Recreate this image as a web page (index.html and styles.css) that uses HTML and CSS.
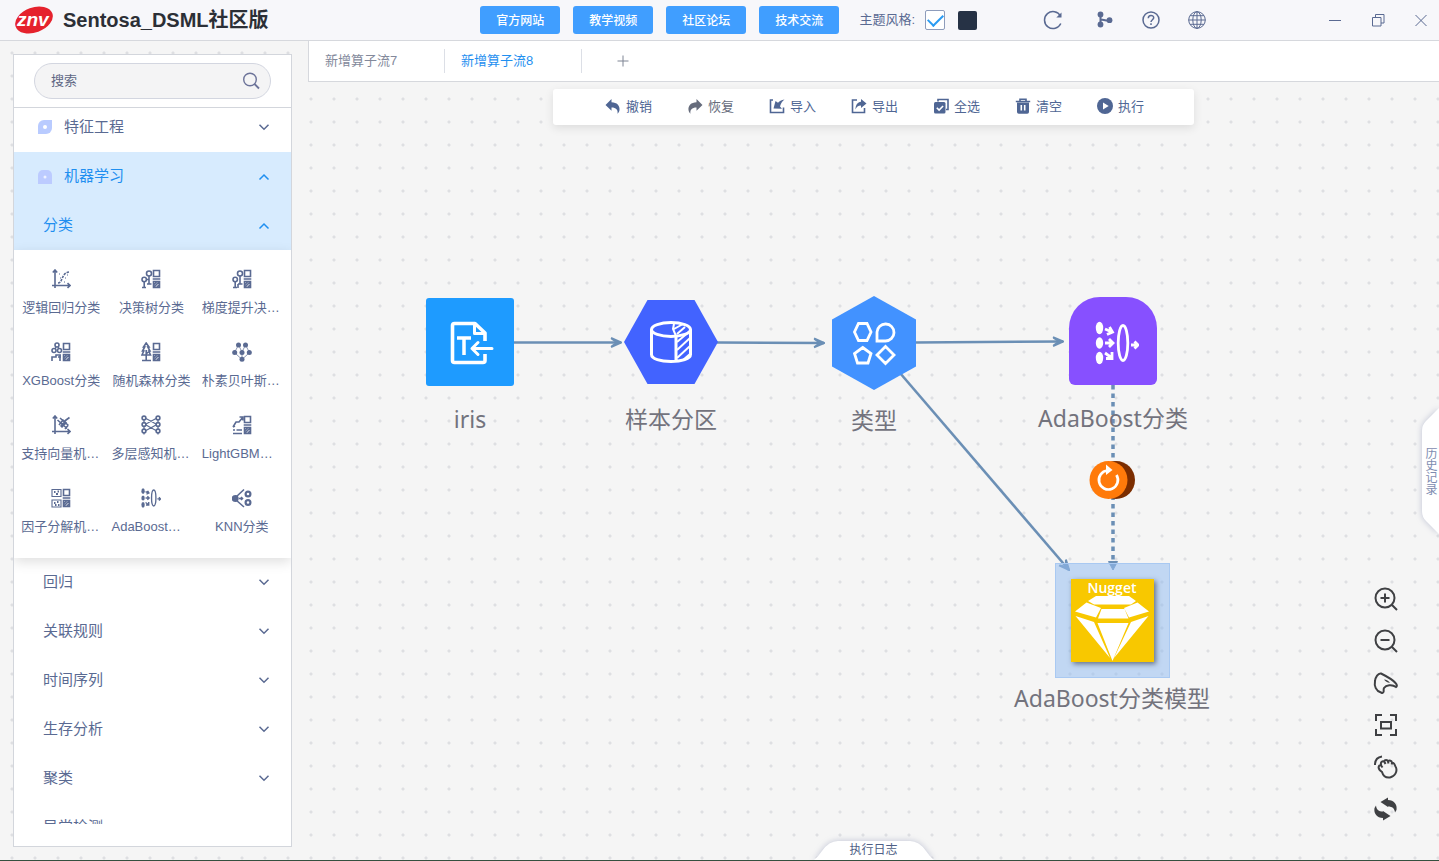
FILE: index.html
```html
<!DOCTYPE html>
<html lang="zh-CN">
<head>
<meta charset="utf-8">
<title>Sentosa_DSML社区版</title>
<link rel="stylesheet" href="styles.css">
</head>
<body>
<svg class="defs" aria-hidden="true">
  <symbol id="boxes" viewBox="0 0 20 20"><path d="M12.5 1.5h6v6h-6zM12.5 12.5h6v6h-6zM11.7 10h7.6M13 18l5-5M13 15.5l2.500-2.500M15.500 18.500l3-3"/></symbol>
  <symbol id="axes" viewBox="0 0 20 20"><path d="M4 1v18M1 16.500h18M1.800 3.500L4 1l2.200 2.500M16.500 14.200l2.500 2.300-2.500 2.300"/></symbol>
  <symbol id="down" viewBox="0 0 12 12"><path d="M1.500 3.800L6 8.200l4.500-4.400"/></symbol>
  <symbol id="up" viewBox="0 0 12 12"><path d="M1.500 8.500L6 4l4.500 4.500"/></symbol>
  <symbol id="boost" viewBox="0 0 44 44"><g fill="currentColor" stroke="none"><ellipse cx="4.500" cy="7" rx="3.700" ry="6.200"/><ellipse cx="4.500" cy="22" rx="3.700" ry="5.700"/><ellipse cx="4.500" cy="37" rx="3.700" ry="6.200"/></g><ellipse cx="28" cy="22" rx="4.800" ry="17.500"/><path d="M10 8l7 3M12 13.500l5.500-2.500-3-5M10 22h7M14 18l4 4-4 4M10 32l7 5M17 31v6.500h-6M36 24h6M39.500 20.500L43 24l-3.500 3.500"/></symbol>
</svg>

<header class="topbar">
  <div class="brand">
    <svg class="logo" viewBox="0 0 38 30"><ellipse cx="19" cy="15" rx="19.500" ry="12.500" transform="rotate(-20 19 15)" fill="#e5222d"/><text x="2" y="21" class="logo-text">znv</text></svg>
    <h1>Sentosa_DSML社区版</h1>
  </div>
  <nav class="links">
    <button type="button">官方网站</button>
    <button type="button">教学视频</button>
    <button type="button">社区论坛</button>
    <button type="button">技术交流</button>
  </nav>
  <div class="theme">
    <label for="light">主题风格:</label>
    <input type="checkbox" id="light" class="check" checked>
    <button type="button" class="swatch" aria-label="深色"></button>
  </div>
  <div class="sys">
    <button type="button" aria-label="刷新"><svg viewBox="0 0 20 20"><path d="M17.800 13.500A8.500 8.500 0 1 1 17.500 6"/><path d="M18.500 2.500v5h-5.200z" fill="currentColor" stroke="none"/></svg></button>
    <button type="button" aria-label="分支"><svg viewBox="0 0 20 20"><path d="M5.500 5v10M5.500 9.500c3 0 4 1 8 1" stroke-width="2"/><g fill="currentColor" stroke="none"><circle cx="5.500" cy="4.500" r="2.900"/><circle cx="5.500" cy="14.500" r="2.900"/><circle cx="14.500" cy="10.200" r="2.900"/></g></svg></button>
    <button type="button" aria-label="帮助"><svg viewBox="0 0 20 20"><circle cx="10" cy="10" r="8"/><path d="M7.300 8.200c0-3.700 5.400-3.500 5.400-.4 0 1.900-2.700 2-2.700 4.200M10 13.300v1.600"/></svg></button>
    <button type="button" aria-label="语言"><svg viewBox="0 0 20 20"><circle cx="10" cy="10" r="8.300"/><ellipse cx="10" cy="10" rx="4.200" ry="8.300"/><path d="M10 1.700v16.600M1.700 10h16.600M3 5.700h14M3 14.300h14"/></svg></button>
  </div>
  <div class="window">
    <button type="button" aria-label="最小化"><svg viewBox="0 0 20 20"><path d="M4 10.500h12"/></svg></button>
    <button type="button" aria-label="还原"><svg viewBox="0 0 20 20"><path d="M4.500 7.500h8.500v8.500H4.500zM7.500 7.500v-3h8.500V13h-3"/></svg></button>
    <button type="button" aria-label="关闭"><svg viewBox="0 0 20 20"><path d="M4.500 5l11 11M15.500 5l-11 11"/></svg></button>
  </div>
</header>

<main class="main">
  <aside class="sidebar">
    <form class="search" role="search">
      <div class="field">
        <input type="text" placeholder="搜索" aria-label="搜索">
        <button type="button" aria-label="查找"><svg viewBox="0 0 20 20"><circle cx="9" cy="8.500" r="6.300"/><path d="M13.500 13l4.500 4.500" stroke-width="1.800"/></svg></button>
      </div>
    </form>
    <div class="menu">
      <div class="menu-list">
        <button type="button" class="row top"><svg class="mark" viewBox="0 0 14 14"><path d="M6 0h8v8a6 6 0 0 1-6 6H0V6a6 6 0 0 1 6-6z" fill="#b9cbff"/><circle cx="7" cy="7" r="2" fill="#fff"/></svg><span>特征工程</span><svg class="chev"><use href="#down"/></svg></button>
        <button type="button" class="row top open"><svg class="mark" viewBox="0 0 14 14"><path d="M5 0h4a5 5 0 0 1 5 5v9H0V5a5 5 0 0 1 5-5z" fill="#bccbff"/><circle cx="7" cy="7" r="1.500" fill="#eef2ff"/></svg><span>机器学习</span><svg class="chev"><use href="#up"/></svg></button>
        <button type="button" class="row open"><span>分类</span><svg class="chev"><use href="#up"/></svg></button>
        <div class="panel">
          <button type="button" class="op"><svg viewBox="0 0 20 20"><use href="#axes"/><path d="M7 14c5 0 3-10 11-11" stroke-dasharray="2.500 1"/><path d="M8 5h1M9 9h1M14 9h1M13 13h1M16 6h1" stroke-width="1"/></svg><span>逻辑回归分类</span></button>
          <button type="button" class="op"><svg viewBox="0 0 20 20"><use href="#boxes"/><circle cx="3.200" cy="10.500" r="2.200"/><circle cx="8" cy="4.500" r="2.500"/><path d="M3.200 13v6M8 7v8M1 18.500h4M6 15h4.500M8 10.500H5.500"/></svg><span>决策树分类</span></button>
          <button type="button" class="op"><svg viewBox="0 0 20 20"><use href="#boxes"/><circle cx="3.200" cy="10.500" r="2.200"/><circle cx="8" cy="4.500" r="2.500"/><path d="M3.200 13v6M8 7v8M1 18.500h4M6 15h4.500M6 15v4"/></svg><span>梯度提升决策树分类</span></button>
          <button type="button" class="op"><svg viewBox="0 0 20 20"><use href="#boxes"/><circle cx="6" cy="3" r="2"/><circle cx="3" cy="8.500" r="2"/><circle cx="8.500" cy="8.500" r="2"/><path d="M5 5L4 7M7 5l1 2M1 19v-4h4v-2h5M7 15h3M9 13v6"/></svg><span>XGBoost分类</span></button>
          <button type="button" class="op"><svg viewBox="0 0 20 20"><use href="#boxes"/><path d="M5.200 1L2.500 5h1.200L1.500 9h1.300L1 13h8.500L7.800 9H9L6.800 5H8zM5.200 8v10.500M1 18.500h9M5.200 12l2-2"/></svg><span>随机森林分类</span></button>
          <button type="button" class="op"><svg viewBox="0 0 20 20"><g fill="currentColor" stroke="none"><circle cx="6.500" cy="3" r="2.500"/><circle cx="13.500" cy="3" r="2.500"/><circle cx="2.700" cy="10.500" r="2.500"/><circle cx="10" cy="10.500" r="2.500"/><circle cx="17.300" cy="10.500" r="2.500"/><circle cx="10" cy="17.300" r="2.500"/></g><path d="M6.500 3L10 10l3.500-7M6.500 3l-4 7.500 7.500 7 7.500-7-4-7.500M10 10v7" stroke-width=".700"/></svg><span>朴素贝叶斯分类</span></button>
          <button type="button" class="op"><svg viewBox="0 0 20 20"><use href="#axes"/><path d="M6.500 5l9.500 8.500M9 3l8.500 7.500M8 10l4.500-5.500M10.500 12.500l5-5.500M13 6.500l5.500-4M14 14l3-3.500M9.500 11.500l5-5.500"/></svg><span>支持向量机分类</span></button>
          <button type="button" class="op"><svg viewBox="0 0 20 20"><g><circle cx="3" cy="3" r="1.900"/><circle cx="3" cy="9.500" r="1.900"/><circle cx="3" cy="16" r="1.900"/><circle cx="17" cy="3" r="1.900"/><circle cx="17" cy="9.500" r="1.900"/><circle cx="17" cy="16" r="1.900"/></g><path d="M5 3.500l10 5.500M15 3.500L5 9M5 10l10 5.500M15 10L5 15.500M3 18v1.500M17 18v1.500M3 5v2.500M17 5v2.500M3 11.500V14M17 11.500V14" stroke-width="1.200"/></svg><span>多层感知机分类</span></button>
          <button type="button" class="op"><svg viewBox="0 0 20 20"><use href="#boxes"/><path d="M1 12l3-5h3l4-5M7.500 2H11v3.500M1 15h2M4.500 15H10M1 18.500h9M1 12l2-1"/></svg><span>LightGBM分类</span></button>
          <button type="button" class="op"><svg viewBox="0 0 20 20"><use href="#boxes"/><path d="M1 1.500h9v7H1zM1 12h9v7H1z" stroke-width="1.100"/><path d="M3 4h1.500M6.500 3.500H8M5 6h2M3 15h1.500M6 14h1.500M4 17h1.500M7 17h1.500" stroke-width="1.800"/></svg><span>因子分解机分类</span></button>
          <button type="button" class="op bold"><svg viewBox="0 0 20 20"><use href="#boost"/></svg><span>AdaBoost分类</span></button>
          <button type="button" class="op"><svg viewBox="0 0 20 20"><circle cx="3.200" cy="10.500" r="2.700" fill="currentColor"/><path d="M4 9l8-7.500M4 12l8 7M7 10.500h3M9 9l1.500 1.500L9 12"/><g stroke-width="2.200"><circle cx="16" cy="6" r="2.400"/><circle cx="16" cy="14.500" r="2.400"/></g></svg><span>KNN分类</span></button>
        </div>
        <button type="button" class="row"><span>回归</span><svg class="chev"><use href="#down"/></svg></button>
        <button type="button" class="row"><span>关联规则</span><svg class="chev"><use href="#down"/></svg></button>
        <button type="button" class="row"><span>时间序列</span><svg class="chev"><use href="#down"/></svg></button>
        <button type="button" class="row"><span>生存分析</span><svg class="chev"><use href="#down"/></svg></button>
        <button type="button" class="row"><span>聚类</span><svg class="chev"><use href="#down"/></svg></button>
        <button type="button" class="row"><span>异常检测</span><svg class="chev"><use href="#down"/></svg></button>
      </div>
    </div>
  </aside>

  <section class="work">
    <div class="tabs">
      <button type="button" class="tab">新增算子流7</button>
      <button type="button" class="tab active">新增算子流8</button>
      <button type="button" class="add" aria-label="新增"><svg viewBox="0 0 12 12"><path d="M6 .500v11M.500 6h11"/></svg></button>
    </div>

    <div class="canvas">
      <svg class="edges" aria-hidden="true">
        <defs>
          <marker id="arrow" viewBox="0 0 12 12" refX="11" refY="6" markerWidth="12" markerHeight="12" markerUnits="userSpaceOnUse" orient="auto"><path d="M1 1.500L11 6 1 10.500M1.500 2L7 6l-5.500 4" fill="none" stroke="#6b8fb5" stroke-width="2"/></marker>
        </defs>
        <g transform="translate(-308 -82)" stroke="#6b8fb5" stroke-width="2.600">
          <path d="M513 342.500H621" marker-end="url(#arrow)"/>
          <path d="M717 342.500L824 343" marker-end="url(#arrow)"/>
          <path d="M915 342.500L1063 341.500" marker-end="url(#arrow)"/>
          <path d="M900 373L1069 570" marker-end="url(#arrow)"/>
          <path d="M1113 385V564" stroke-width="3.500" stroke-dasharray="4.500 4"/>
          <path d="M1108.500 561.500h9L1113 570z" fill="#6b8fb5" stroke-width="1"/>
        </g>
      </svg>

      <div class="toolbar">
        <button type="button"><svg viewBox="0 0 16 16"><path d="M6.500 1v3.200C12 4.300 15 7.500 14.500 12c-.3 1.800-1 2.800-2 3.800.8-4-1.500-6.300-6-6.300v3.200L.500 7z" fill="currentColor" stroke="none"/></svg>撤销</button>
        <button type="button" class="grey"><svg viewBox="0 0 16 16"><path d="M9.500 1v3.200C4 4.300 1 7.500 1.500 12c.3 1.800 1 2.800 2 3.800-.8-4 1.500-6.300 6-6.300v3.200L15.500 7z" fill="currentColor" stroke="none"/></svg>恢复</button>
        <button type="button"><svg viewBox="0 0 16 16"><path d="M4 2H1.500v12.500h13V9.500"/><path d="M15.500 1.500c-3 .3-5.500 1.700-6.500 3.300L6.500 3 4.500 10.500l8.500.3-2-2.300c.5-2.500 2-5 4.500-7z" fill="currentColor" stroke="none"/></svg>导入</button>
        <button type="button"><svg viewBox="0 0 16 16"><path d="M6 2H1.500v12.500h12V10"/><path d="M10 1l5.500 4.500L10 10V7.500C7 7.500 5.500 9 4.500 11.500 4.500 7 6.500 4 10 3.700z" fill="currentColor" stroke="none"/></svg>导出</button>
        <button type="button"><svg viewBox="0 0 16 16"><path d="M5 3.500V1.500h10v10h-2"/><rect x="1" y="4" width="11.500" height="11.500" rx="1.500" fill="currentColor" stroke="none"/><path d="M3.800 9.700l2.300 2.300 4-4" stroke="#fff"/></svg>全选</button>
        <button type="button"><svg viewBox="0 0 16 16"><path d="M.800 3.500h14.400M5 3V1.200h6V3" /><path d="M2 4.500h12V14a1.800 1.800 0 0 1-1.800 1.800H3.800A1.800 1.800 0 0 1 2 14z" fill="currentColor" stroke="none"/><path d="M6.300 7v5.500M9.700 7v5.500" stroke="#fff"/></svg>清空</button>
        <button type="button"><svg viewBox="0 0 16 16"><circle cx="8" cy="8" r="8" fill="currentColor" stroke="none"/><path d="M6 4.500v7L11.700 8z" fill="#fff" stroke="none"/></svg>执行</button>
      </div>

      <figure class="node n-iris">
        <svg viewBox="0 0 94 94"><rect x="3" y="3" width="88" height="88" rx="3" fill="#1e9bff"/><g fill="none" stroke="#fff" stroke-width="3.600" stroke-linejoin="round"><path d="M62 46V38L52 28.500H31.500a2 2 0 0 0-2 2v35a2 2 0 0 0 2 2H60a2 2 0 0 0 2-2v-6.500"/><path d="M51.500 29v9.500H61" stroke-width="3"/><path d="M34 43h14M41 43v17" stroke-width="3.500"/><path d="M69 53.500H49M55 47.500l-6 6 6 6" stroke-linecap="round" stroke-width="3"/></g></svg>
        <figcaption>iris</figcaption>
      </figure>
      <figure class="node n-split">
        <svg viewBox="0 0 94 94"><path d="M23.500 5h47L94 47 70.500 89h-47L0 47z" fill="#4263ff"/><g fill="none" stroke="#fff" stroke-width="3"><ellipse cx="47" cy="34.500" rx="19.500" ry="7"/><path d="M27.500 34.500v25c0 4.500 9 7 19.500 7s19.500-2.500 19.500-7v-25M52 41v25"/><path d="M50 29l-1 5 3 7M50 34l9-5M53 39l8-7M53 47l13-11M53 55l13-12M53 63l13-12M59 65l7-6" stroke-width="2"/></g></svg>
        <figcaption>样本分区</figcaption>
      </figure>
      <figure class="node n-type">
        <svg viewBox="0 0 94 94"><path d="M47 0l42 23.500v47L47 94 5 70.500v-47z" fill="#4292ff"/><g fill="none" stroke="#fff" stroke-width="2.800"><path d="M31.500 27.500h8.500L44 36l-4 8.500h-8.500L27.500 36zM50 45V36a8.500 8.500 0 1 1 8.500 9zM35.700 51.500l8.300 6-3 9.500H30.500l-3-9.500zM58.500 50.500l8.500 8.500-8.500 8.500L50 59z"/></g></svg>
        <figcaption>类型</figcaption>
      </figure>
      <figure class="node n-ada">
        <svg viewBox="0 0 94 94"><path d="M34 3h26a31 31 0 0 1 31 31v51a6 6 0 0 1-6 6H9a6 6 0 0 1-6-6V34A31 31 0 0 1 34 3z" fill="#8750ff"/><svg x="29" y="27" width="44" height="44" fill="none" stroke="#fff" stroke-width="2.800" color="#fff"><use href="#boost"/></svg></svg>
        <figcaption>AdaBoost分类</figcaption>
      </figure>
      <svg class="badge" viewBox="0 0 46 40"><circle cx="27" cy="20" r="19" fill="#7b2d00"/><circle cx="19.500" cy="20" r="19" fill="#ff7a0a"/><path d="M27.500 15a9.500 9.500 0 1 1-9-4.500" fill="none" stroke="#fff" stroke-width="2.700"/><path d="M17 4.500l6.500 5.500-6.500 5z" fill="#fff"/></svg>
      <figure class="node n-model">
        <div class="selection">
          <div class="nugget">
            <span>Nugget</span>
            <svg viewBox="0 0 76 66" fill="#fff"><path d="M22 0h33l7 5-5 3.500H20L14 5zM12.500 6.500L27 12l-5 9.500L1 15.500zM63.500 6.500L50 12l5 9.500 20-6zM27.500 13h23l4 9.500H24zM1.500 20L20 26l16 36zM74.500 20L57 26 40 62zM23.500 27h31L38.500 65z"/></svg>
          </div>
        </div>
        <figcaption>AdaBoost分类模型</figcaption>
      </figure>

      <div class="tools">
        <button type="button" aria-label="放大"><svg viewBox="0 0 26 26"><circle cx="12" cy="12" r="9.500"/><path d="M19 19l5 5M12 7.500v9M7.500 12h9"/></svg></button>
        <button type="button" aria-label="缩小"><svg viewBox="0 0 26 26"><circle cx="12" cy="12" r="9.500"/><path d="M19 19l5 5M7.500 12h9"/></svg></button>
        <button type="button" aria-label="旋转"><svg viewBox="0 0 26 26"><path d="M8 22.500C3 21 1 16 2 11c.5-4 3-8 6-7.500C11 5 20 10 22.500 13c2 2 1.500 3.500.5 4-4-3-10-2-12 1-.8 1.500 0 3-.5 4-.4 1.200-1.500 1-2.500.5z"/><path d="M11 9.500c2.500 0 4.500 1.500 6 3.300-2.500.2-4.500-1.300-6-3.300z" fill="currentColor" stroke="none"/></svg></button>
        <button type="button" aria-label="适应屏幕"><svg viewBox="0 0 26 26"><path d="M3 9V3h6M17 3h6v6M23 17v6h-6M9 23H3v-6M8 10h10v6.500H8z"/></svg></button>
        <button type="button" aria-label="拖动"><svg viewBox="0 0 26 26"><path d="M2 11C2 6 5 3 9 2.500" /><path d="M9 18c-3-2-4-4-3-6 .5-1 2-1 2.500 0-1.500-3 0-5.500 2.500-4.500.7-2 3.500-2 4 0 1.500-1.500 3.500-1 4 1 3 0 2.500 3 4 5 1.500 4-1 9-6 10-4 .5-7-2-8-5.500zM8.500 12l1 1.500M11.500 8l1 2M15 7.500l.500 2M19 8.500l-.300 2"/></svg></button>
        <button type="button" aria-label="重置"><svg viewBox="0 0 26 26"><g fill="currentColor" stroke="none"><path id="turn" d="M7.500 6L15 1.500V4c6 0 9.500 4.500 8.500 10L22 16.500c-.5-4-2.500-6-7-6V11z"/><use href="#turn" transform="rotate(180 12.500 13)"/></g></svg></button>
      </div>

      <button type="button" class="history"><svg viewBox="0 0 18 128"><path d="M18 1L5 14Q1 18 1 24v80q0 6 4 10l13 13z"/></svg><span>历史记录</span></button>
      <button type="button" class="log"><svg viewBox="0 0 120 20"><path d="M0 20Q4 17 8 11Q15 1 24 1h72q9 0 16 10 4 6 8 9z"/></svg><span>执行日志</span></button>
    </div>
  </section>
</main>
</body>
</html>
```
FILE: styles.css
```css
* { box-sizing: border-box; }

body {
  margin: 0;
  height: 100vh;
  display: flex;
  flex-direction: column;
  overflow: hidden;
  border-bottom: 1px solid #35503f;
  font-family: "Liberation Sans", "Noto Sans CJK SC", sans-serif;
  font-size: 13px;
  color: #5a6a92;
  background-color: #f5f5f5;
  background-image: radial-gradient(circle at 12px 7px, #dedfe2 1px, transparent 2px);
  background-size: 23px 23px;
}

button {
  font: inherit;
  color: inherit;
  background: none;
  border: 0;
  padding: 0;
  margin: 0;
}

svg { display: block; flex: none; }

button svg { fill: none; stroke: currentColor; }

figure { margin: 0; }

.defs { position: absolute; width: 0; height: 0; }

/* Top bar */
.topbar {
  flex: none;
  display: flex;
  align-items: center;
  height: 41px;
  padding: 0 5px 0 15px;
  border-bottom: 1px solid #d6d8dd;
  background: #f7f7fa;
}

.brand { display: flex; align-items: center; gap: 10px; margin-right: auto; }
.logo { width: 38px; height: 30px; }
.logo-text { font: italic bold 19px "Liberation Sans", sans-serif; fill: #fff; }
.brand h1 { margin: 0; font-size: 20px; line-height: 30px; color: #2c2f36; }

.links { display: flex; gap: 13px; }
.links button {
  width: 80px;
  height: 28px;
  padding-bottom: 2px;
  border-radius: 3px;
  background: #409eff;
  color: #fff;
  font-size: 12px;
  font-weight: 500;
}

.theme { display: flex; align-items: center; gap: 10px; margin-left: 20px; }
.theme label { padding-bottom: 4px; }
.check {
  appearance: none;
  width: 20px;
  height: 20px;
  margin: 0;
  border: 1px solid #8e9cbb;
  border-radius: 2px;
  background: #fff;
  display: grid;
  place-items: center;
}
.check:checked::before {
  content: "";
  width: 13px;
  height: 7px;
  margin-bottom: 4px;
  border: solid #2a9bf2;
  border-width: 0 0 2px 2px;
  transform: rotate(-45deg);
}
.swatch { width: 19px; height: 19px; margin-left: 3px; border-radius: 2px; background: #263245; }

.sys { display: flex; gap: 26px; margin-left: 66px; }
.sys button:first-child { margin-right: 6px; }
.sys svg { width: 20px; height: 20px; stroke-width: 1.5; }
.sys button:last-child svg { stroke-width: 1; }

.window { display: flex; gap: 23px; margin-left: 118px; padding-right: 3px; }
.window svg { width: 20px; height: 20px; }

/* Page body */
.main { flex: 1; min-height: 0; display: flex; gap: 16px; padding-left: 13px; }

.sidebar {
  flex: none;
  width: 279px;
  margin: 13px 0;
  display: flex;
  flex-direction: column;
  border: 1px solid #d3d6dc;
  background: #fff;
}

.search { padding: 8px 20px; border-bottom: 1px solid #d3d6dc; }
.field {
  display: flex;
  align-items: center;
  height: 36px;
  padding: 0 9px 0 16px;
  border: 1px solid #d3d6e0;
  border-radius: 18px;
  background: #f4f4f5;
}
.field input {
  flex: 1;
  min-width: 0;
  padding: 0 0 2px;
  border: 0;
  outline: 0;
  background: none;
  font: inherit;
}
.field input::placeholder { color: #606784; opacity: 1; }
.field svg { width: 20px; height: 20px; stroke-width: 1.4; color: #6c7399; }

.menu { flex: 1; min-height: 0; overflow: hidden; margin-bottom: 22px; }
.menu-list { margin-top: -5px; }

.row {
  display: flex;
  align-items: center;
  width: 100%;
  height: 49px;
  padding: 0 21px 2px 29px;
  font-size: 15px;
  text-align: left;
}
.row span { flex: 1; padding-bottom: 2px; }
.row.top { padding-left: 24px; }
.row.open { background: #d7ebfe; color: #1f8ff0; padding-bottom: 0; }
.row.open span { padding-bottom: 4px; }
.mark { width: 14px; height: 14px; margin-right: 12px; stroke: none; }
.chev { width: 12px; height: 12px; stroke-width: 1.5; }

.panel {
  position: relative;
  display: grid;
  grid-template-columns: repeat(3, 1fr);
  gap: 17px 10px;
  padding: 19px 9px 14px 7px;
  background: #fff;
  box-shadow: 0 4px 12px rgba(0, 0, 0, 0.13);
}
.op {
  display: grid;
  align-content: start;
  justify-items: center;
  gap: 9px;
  height: 56px;
  min-width: 0;
}
.op svg { width: 20px; height: 20px; stroke-width: 1.6; }
.op.bold svg { stroke-width: 3; }
.op span {
  max-width: 80px;
  line-height: 20px;
  overflow: hidden;
  white-space: nowrap;
  text-overflow: ellipsis;
}

/* Workspace */
.work { flex: 1; min-width: 0; display: flex; flex-direction: column; }

.tabs {
  flex: none;
  display: flex;
  align-items: center;
  height: 41px;
  border-bottom: 1px solid #d6d8dd;
  border-left: 1px solid #d6d8dd;
  background: #fff;
}
.tab {
  width: 136px;
  height: 24px;
  padding: 0 0 4px 16px;
  border-right: 1px solid #dcdfe6;
  text-align: left;
  color: #83899b;
}
.tab.active { width: 137px; color: #1f8ff0; }
.add { margin-left: 35px; color: #7e8594; }
.add svg { width: 12px; height: 12px; }

.canvas { position: relative; flex: 1; min-height: 0; padding-top: 7px; }
.edges { position: absolute; inset: 0; width: 100%; height: 100%; }

.toolbar {
  position: relative;
  display: flex;
  justify-content: center;
  gap: 35px;
  width: fit-content;
  height: 36px;
  margin: 0 auto;
  padding: 0 50px 0 52px;
  border-radius: 3px;
  background: #fff;
  box-shadow: 0 3px 10px rgba(0, 0, 0, 0.1);
  color: #4f6694;
}
.toolbar button { display: flex; align-items: center; gap: 5px; padding-bottom: 3px; }
.toolbar svg { width: 16px; height: 16px; stroke-width: 1.6; }
.toolbar .grey { color: #666c7c; }

/* Flow nodes */
.node {
  position: absolute;
  display: flex;
  flex-direction: column;
  align-items: center;
  gap: 14px;
  width: 220px;
}
.node > svg { width: 94px; height: 94px; }
.node figcaption {
  font-family: "Noto Sans", "Noto Sans CJK SC", sans-serif;
  font-size: 23px;
  line-height: 32px;
  color: #73737d;
  white-space: nowrap;
}
.n-iris { left: 52px; top: 213px; }
.n-split { left: 253px; top: 213px; }
.n-type { left: 456px; top: 214px; }
.n-ada { left: 695px; top: 212px; }
.n-model { left: 694px; top: 481px; gap: 4px; }
.badge { position: absolute; left: 781px; top: 378px; width: 46px; height: 40px; }

.selection {
  display: grid;
  place-items: center;
  width: 115px;
  height: 115px;
  border: 1px solid #a9c9f2;
  background: rgba(150, 190, 240, 0.55);
}
.nugget {
  display: flex;
  flex-direction: column;
  align-items: center;
  width: 83px;
  height: 83px;
  background: #f8c800;
  box-shadow: 2px 2px 5px rgba(60, 70, 90, 0.7);
  color: #fff;
  font: 600 14px/17px "Open Sans", sans-serif;
}
.nugget svg { width: 76px; height: 66px; }

/* Canvas controls */
.tools {
  position: absolute;
  right: 40px;
  bottom: 38px;
  display: grid;
  gap: 16px;
  color: #3f4043;
}
.tools svg { width: 26px; height: 26px; stroke-width: 2; }

.history, .log { position: absolute; display: grid; place-items: center; font-size: 12px; }
.history > *, .log > * { grid-area: 1 / 1; }
.history svg, .log svg { fill: #fff; stroke: none; filter: drop-shadow(0 0 3px rgba(90, 100, 150, 0.35)); }
.history span, .log span { position: relative; }
.history { right: 0; top: 325px; color: #7e8cb0; }
.history svg { width: 18px; height: 128px; }
.history span { writing-mode: vertical-rl; line-height: 12px; }
.log { left: 0; right: 0; bottom: 0; width: 120px; margin: 0 auto; color: #4f5f86; }
.log svg { width: 120px; height: 20px; }
.log span { line-height: 16px; }
```
